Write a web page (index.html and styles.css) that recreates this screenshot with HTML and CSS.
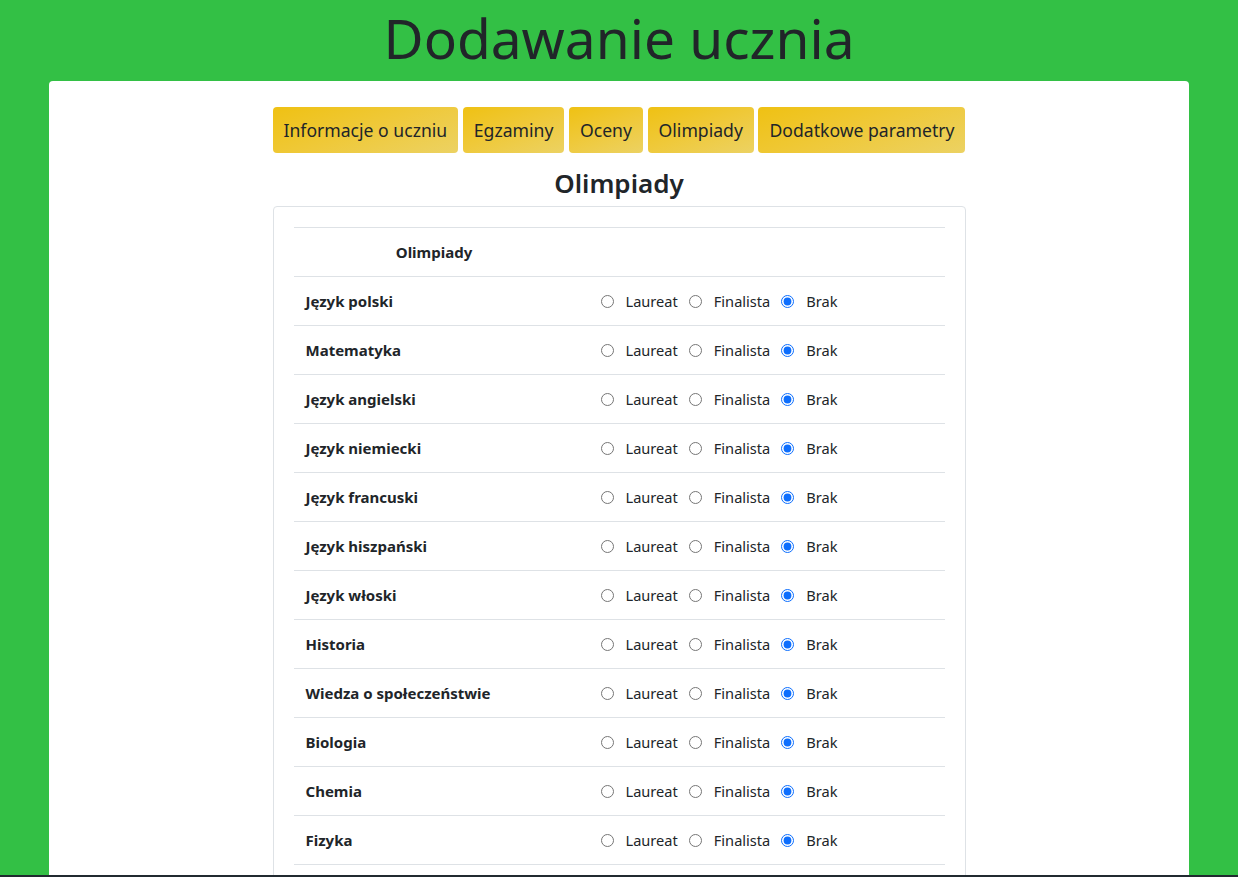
FILE: index.html
```html
<!DOCTYPE html>
<html lang="pl">
<head>
<meta charset="utf-8">
<title>Dodawanie ucznia</title>
<link rel="stylesheet" href="styles.css">
</head>
<body>
<h1 class="page-title">Dodawanie ucznia</h1>
<main class="container">
  <div class="column">
    <nav class="tabs">
      <button class="tab">Informacje o uczniu</button>
      <button class="tab">Egzaminy</button>
      <button class="tab">Oceny</button>
      <button class="tab">Olimpiady</button>
      <button class="tab">Dodatkowe parametry</button>
    </nav>
    <h2 class="section-title">Olimpiady</h2>
    <div class="card">
      <table class="table">
        <thead>
          <tr><th class="head-name">Olimpiady</th><th></th></tr>
        </thead>
        <tbody>
          <tr><td class="name">Język polski</td><td><div class="radios"><label><input type="radio" name="r1">Laureat</label><label><input type="radio" name="r1">Finalista</label><label><input type="radio" name="r1" checked>Brak</label></div></td></tr>
          <tr><td class="name">Matematyka</td><td><div class="radios"><label><input type="radio" name="r2">Laureat</label><label><input type="radio" name="r2">Finalista</label><label><input type="radio" name="r2" checked>Brak</label></div></td></tr>
          <tr><td class="name">Język angielski</td><td><div class="radios"><label><input type="radio" name="r3">Laureat</label><label><input type="radio" name="r3">Finalista</label><label><input type="radio" name="r3" checked>Brak</label></div></td></tr>
          <tr><td class="name">Język niemiecki</td><td><div class="radios"><label><input type="radio" name="r4">Laureat</label><label><input type="radio" name="r4">Finalista</label><label><input type="radio" name="r4" checked>Brak</label></div></td></tr>
          <tr><td class="name">Język francuski</td><td><div class="radios"><label><input type="radio" name="r5">Laureat</label><label><input type="radio" name="r5">Finalista</label><label><input type="radio" name="r5" checked>Brak</label></div></td></tr>
          <tr><td class="name">Język hiszpański</td><td><div class="radios"><label><input type="radio" name="r6">Laureat</label><label><input type="radio" name="r6">Finalista</label><label><input type="radio" name="r6" checked>Brak</label></div></td></tr>
          <tr><td class="name">Język włoski</td><td><div class="radios"><label><input type="radio" name="r7">Laureat</label><label><input type="radio" name="r7">Finalista</label><label><input type="radio" name="r7" checked>Brak</label></div></td></tr>
          <tr><td class="name">Historia</td><td><div class="radios"><label><input type="radio" name="r8">Laureat</label><label><input type="radio" name="r8">Finalista</label><label><input type="radio" name="r8" checked>Brak</label></div></td></tr>
          <tr><td class="name">Wiedza o społeczeństwie</td><td><div class="radios"><label><input type="radio" name="r9">Laureat</label><label><input type="radio" name="r9">Finalista</label><label><input type="radio" name="r9" checked>Brak</label></div></td></tr>
          <tr><td class="name">Biologia</td><td><div class="radios"><label><input type="radio" name="r10">Laureat</label><label><input type="radio" name="r10">Finalista</label><label><input type="radio" name="r10" checked>Brak</label></div></td></tr>
          <tr><td class="name">Chemia</td><td><div class="radios"><label><input type="radio" name="r11">Laureat</label><label><input type="radio" name="r11">Finalista</label><label><input type="radio" name="r11" checked>Brak</label></div></td></tr>
          <tr><td class="name">Fizyka</td><td><div class="radios"><label><input type="radio" name="r12">Laureat</label><label><input type="radio" name="r12">Finalista</label><label><input type="radio" name="r12" checked>Brak</label></div></td></tr>
          <tr><td class="name">Geografia</td><td><div class="radios"><label><input type="radio" name="r13">Laureat</label><label><input type="radio" name="r13">Finalista</label><label><input type="radio" name="r13" checked>Brak</label></div></td></tr>
          <tr><td class="name">Informatyka</td><td><div class="radios"><label><input type="radio" name="r14">Laureat</label><label><input type="radio" name="r14">Finalista</label><label><input type="radio" name="r14" checked>Brak</label></div></td></tr>
        </tbody>
      </table>
    </div>
  </div>
</main>
<div class="bottom-bar"></div>
</body>
</html>
```

FILE: styles.css
```css
* { box-sizing: border-box; }
html, body { margin: 0; padding: 0; }
body {
  background: #33c045;
  font-family: "Noto Sans", "Open Sans", sans-serif;
  color: #212529;
}
.page-title {
  margin: 0;
  height: 81px;
  display: flex;
  align-items: center;
  justify-content: center;
  font-size: 55px;
  font-weight: 400;
  line-height: 1;
  padding-bottom: 6px;
}
.container {
  width: 1140px;
  margin: 0 auto;
  background: #fff;
  border-radius: 4px 4px 0 0;
  padding-top: 26px;
  display: flex;
  justify-content: center;
  min-height: 900px;
}
.column { width: 693px; }
.tabs {
  display: flex;
  gap: 4px;
  justify-content: space-between;
}
.tab {
  font-family: inherit;
  font-size: 17.6px;
  color: #212529;
  height: 46px;
  padding: 0 11px;
  border: none;
  border-radius: 4px;
  background: linear-gradient(160deg, #efc113 0%, #efc93a 50%, #ecd263 100%);
  flex: none;
  cursor: pointer;
}
.section-title {
  margin: 13px 0 0;
  text-align: center;
  font-size: 26px;
  font-weight: 600;
  line-height: 34px;
}
.card {
  border: 1px solid #dee2e6;
  border-radius: 4px;
  padding: 20px 20px 0;
  margin-top: 6px;
}
.table {
  width: 100%;
  border-collapse: collapse;
}
.table th, .table td {
  border-top: 1px solid #dee2e6;
  height: 49px;
  padding: 0 12px;
  vertical-align: middle;
  font-size: 15px;
}
.table th { font-weight: 700; }
.table th.head-name { text-align: center; padding-right: 26px; }
.name { font-weight: 700; width: 295px; }
.radios {
  display: flex;
  align-items: center;
  color: #212529;
  font-size: 14.6px;
}
.radios label {
  display: flex;
  align-items: center;
  margin-right: 11px;
}
.radios input {
  width: 13px;
  height: 13px;
  margin: 0 12px 0 0;
  accent-color: #0d6efd;
}
.bottom-bar {
  position: fixed;
  left: 0;
  right: 0;
  bottom: 0;
  height: 2px;
  background: #212a30;
}
```
